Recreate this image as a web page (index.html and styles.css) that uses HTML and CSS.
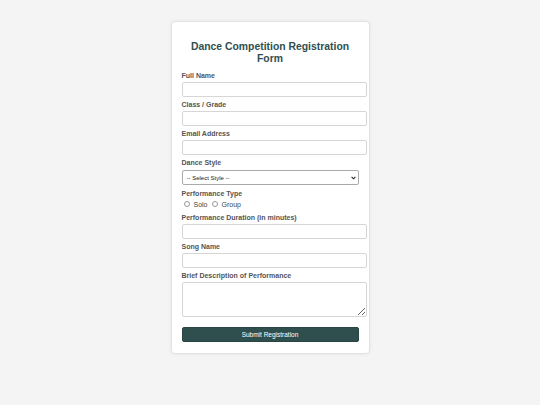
FILE: index.html
```html
<!DOCTYPE html>
<html>
<head>
<meta charset="utf-8">
<link rel="stylesheet" href="styles.css">
</head>
<body>
<div class="card">
  <h2 class="title">Dance Competition Registration Form</h2>
  <form class="form">
    <label class="lbl">Full Name</label>
    <input class="inp" type="text">
    <label class="lbl">Class / Grade</label>
    <input class="inp" type="text">
    <label class="lbl">Email Address</label>
    <input class="inp" type="email">
    <label class="lbl">Dance Style</label>
    <div class="selwrap">
      <select class="sel">
        <option>-- Select Style --</option>
      </select>
      <svg class="chev" width="5" height="4" viewBox="0 0 5 4"><path d="M0.6 0.8 L2.5 2.8 L4.4 0.8" fill="none" stroke="#222" stroke-width="1.1"/></svg>
    </div>
    <label class="lbl">Performance Type</label>
    <div class="radios">
      <span class="rad"></span><span class="rtxt">Solo</span>
      <span class="rad"></span><span class="rtxt">Group</span>
    </div>
    <label class="lbl">Performance Duration (in minutes)</label>
    <input class="inp" type="text">
    <label class="lbl">Song Name</label>
    <input class="inp" type="text">
    <label class="lbl">Brief Description of Performance</label>
    <textarea class="ta"></textarea>
    <button class="btn" type="button">Submit Registration</button>
  </form>
</div>
</body>
</html>
```
FILE: styles.css
```css
html, body {
  margin: 0;
  padding: 0;
}
body {
  background: #f4f4f4;
  font-family: "Liberation Sans", Arial, sans-serif;
  width: 540px;
  height: 405px;
  overflow: hidden;
}
.card {
  width: 177px;
  margin: 21px auto 0;
  padding: 10px 10px 11px;
  background: #fff;
  border: 1px solid #e2e2e2;
  border-radius: 4px;
  box-shadow: 0 0 4px rgba(0,0,0,0.06);
}
.title {
  margin: 9px 0 7px;
  font-size: 10.4px;
  line-height: 12px;
  font-weight: bold;
  text-align: center;
  color: #2f4f4f;
}
.form {
  display: flex;
  flex-direction: column;
  align-items: flex-start;
}
.lbl {
  display: block;
  font-size: 7px;
  line-height: 8px;
  font-weight: bold;
  color: #555;
  margin-bottom: 3px;
}
.inp {
  width: 100%;
  height: 9px;
  padding: 2px 3px;
  margin: -1px 0 4px;
  border: 1px solid #d6d6d6;
  border-radius: 2px;
  font-size: 7px;
  box-sizing: content-box;
  outline: none;
}
.selwrap {
  position: relative;
  width: 100%;
  margin: 0 0 5px;
}
.sel {
  display: block;
  width: 100%;
  height: 15px;
  margin: 0;
  padding: 0 4px;
  font-size: 6px;
  font-family: "Liberation Sans", Arial, sans-serif;
  border: 1px solid #aaa;
  border-radius: 2px;
  background: #fff;
  color: #222;
  appearance: none;
  -webkit-appearance: none;
}
.chev {
  position: absolute;
  right: 3px;
  top: 6px;
}
.radios {
  display: flex;
  align-items: center;
  height: 10px;
  margin: -2px 0 5px;
  font-size: 7px;
  color: #444;
}
.rad {
  display: inline-block;
  width: 4px;
  height: 4px;
  border: 1px solid #999;
  border-radius: 50%;
  margin: 0 4px 0 2px;
  background: #fff;
}
.rtxt {
  margin-right: 2px;
}
.ta {
  width: 100%;
  height: 29px;
  padding: 2px 3px;
  margin: -1px 0 10px;
  border: 1px solid #d6d6d6;
  border-radius: 2px;
  box-sizing: content-box;
  resize: vertical;
  display: block;
}
.btn {
  width: 100%;
  height: 15px;
  padding: 0;
  background: #2f4f4f;
  color: #fff;
  border: 1px solid #2a4444;
  border-radius: 2px;
  font-size: 6.5px;
  font-family: "Liberation Sans", Arial, sans-serif;
}
```
